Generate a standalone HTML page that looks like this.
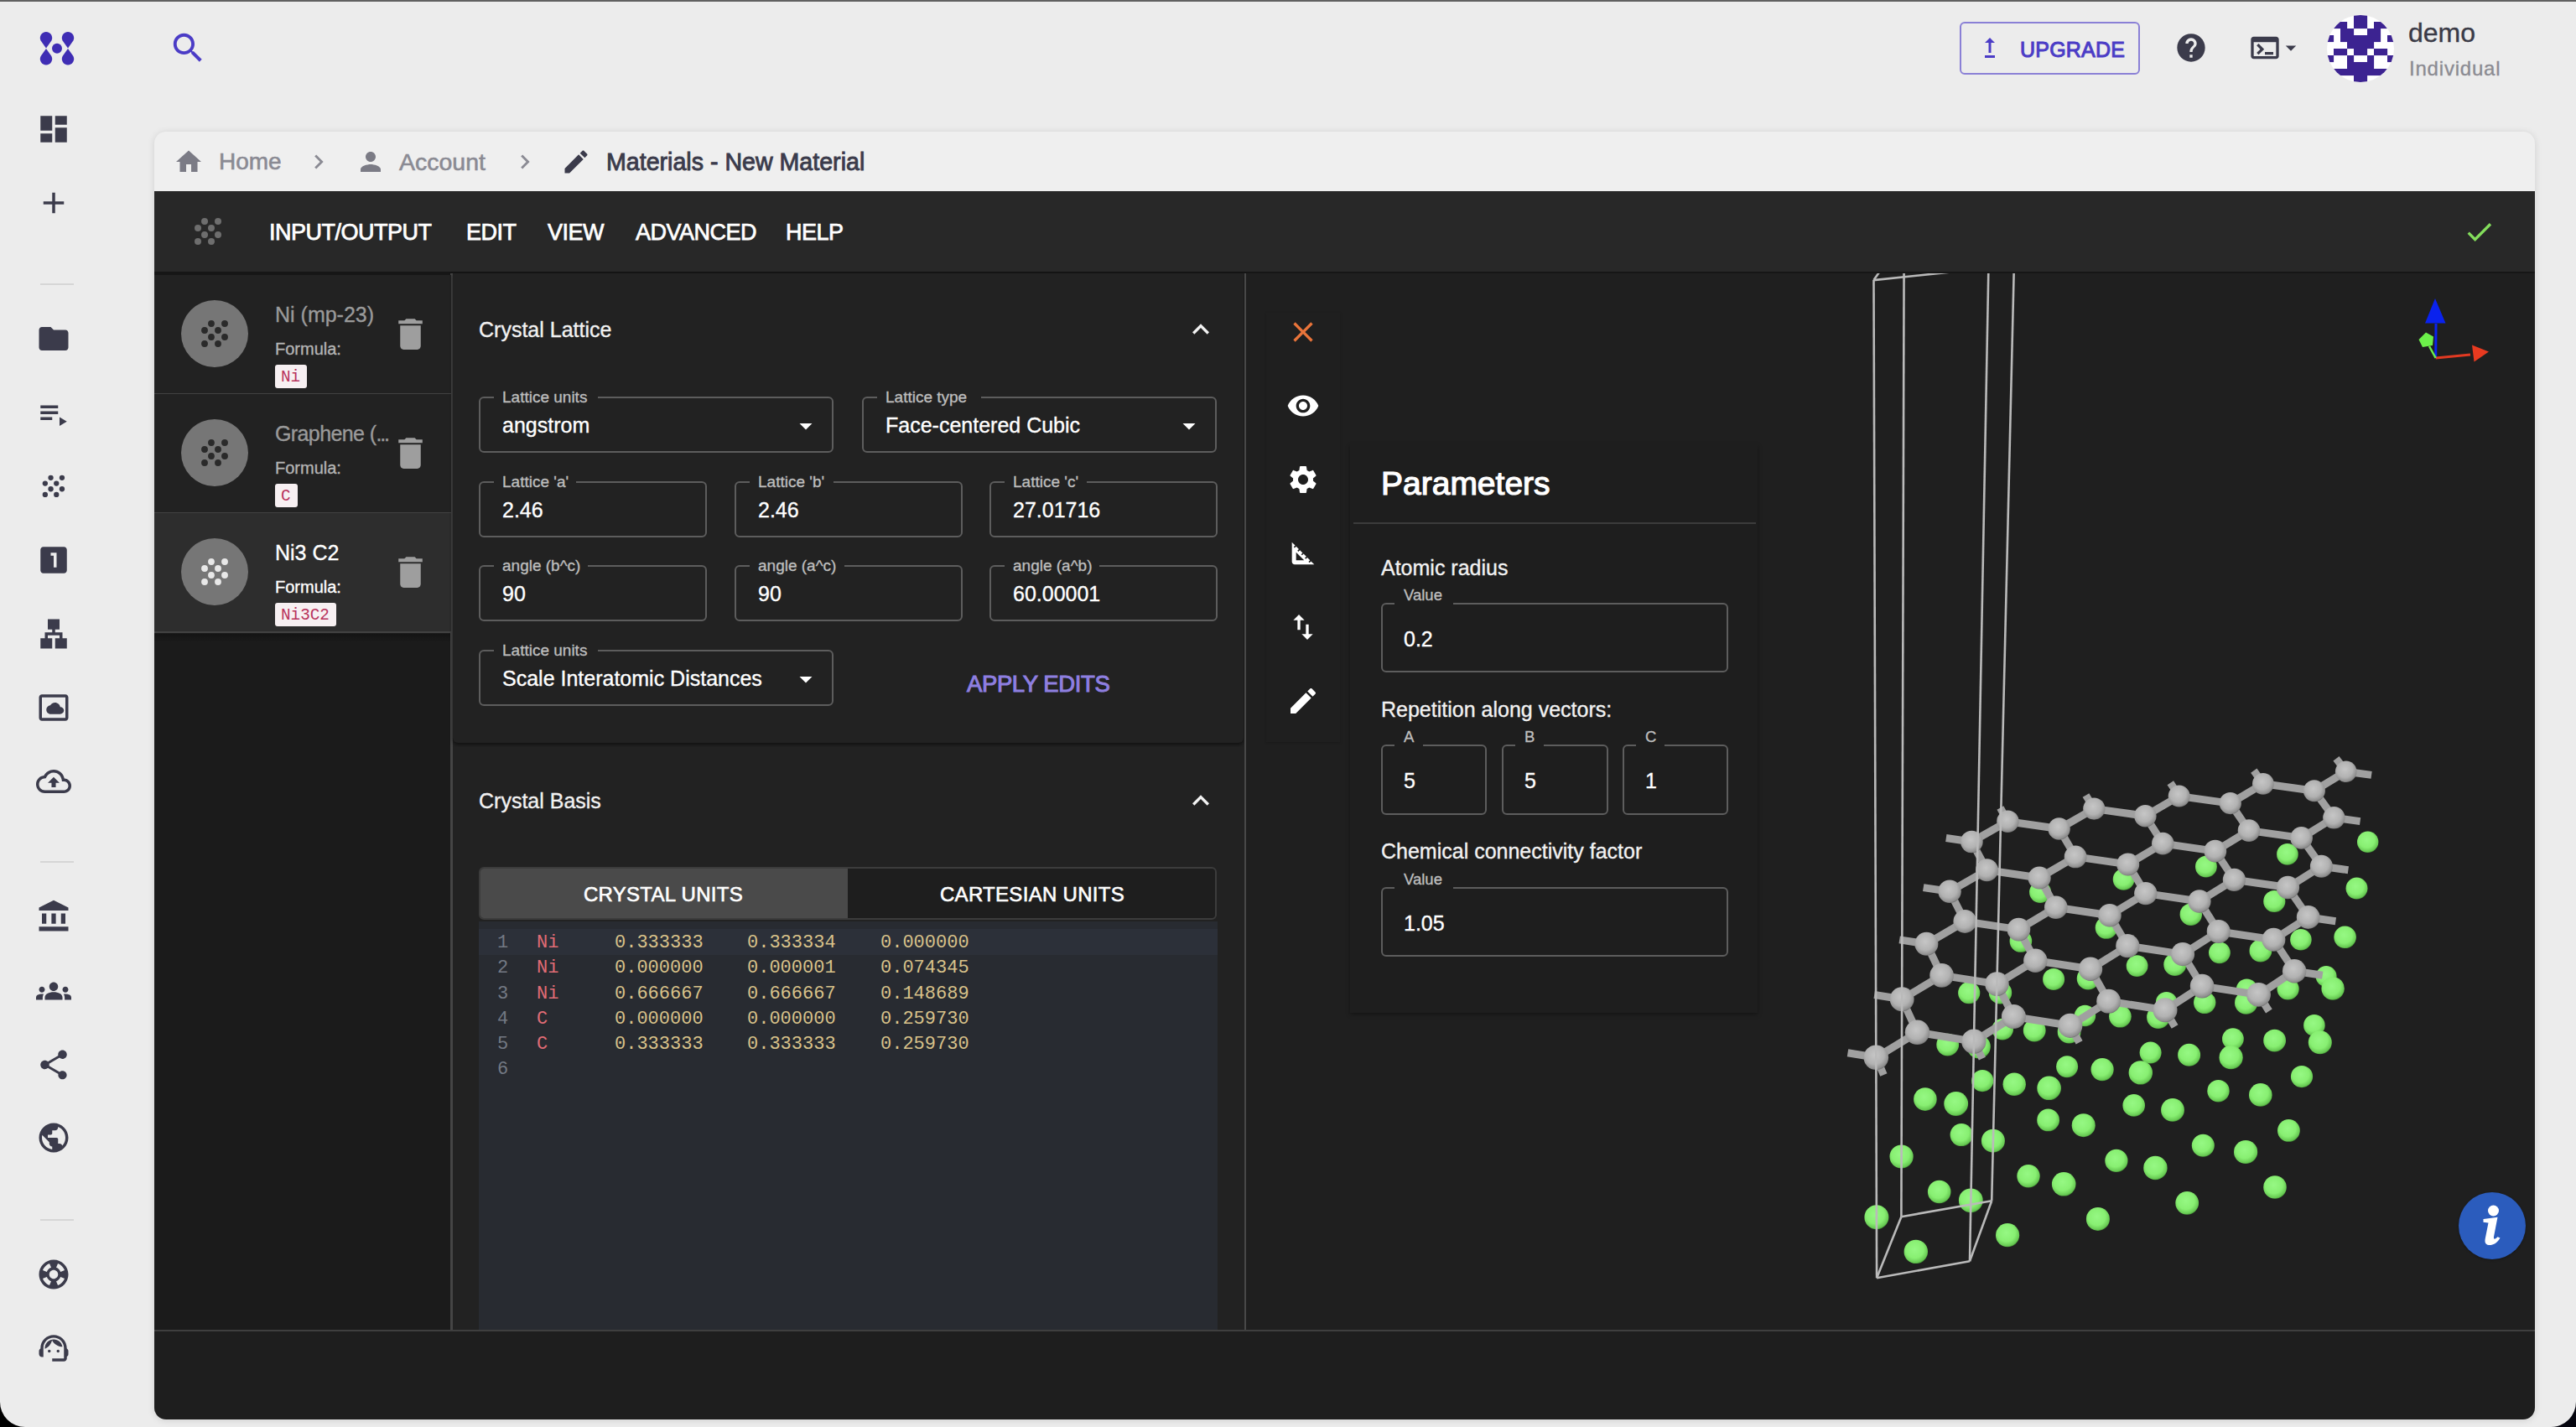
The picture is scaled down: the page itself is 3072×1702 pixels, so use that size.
<!DOCTYPE html><html><head><meta charset="utf-8"><style>html,body{margin:0;padding:0;width:3072px;height:1702px;overflow:hidden;position:relative}</style></head><body><div style="position:absolute;left:0px;top:0px;width:3072px;height:1702px;background:#ececec"></div>
<div style="position:absolute;left:0px;top:0px;width:3072px;height:2px;background:#616161"></div>
<svg style="position:absolute;left:0;top:0;width:200px;height:120px" viewBox="0 0 200 120"><g fill="#3f2db4"><path d="M55 57.5 L48.6 48.5 A7.2 7.2 0 1 1 61.4 48.5 Z"/><path d="M55 58 L48.6 67 A7.2 7.2 0 1 0 61.4 67 Z"/><path d="M81 57.5 L74.6 48.5 A7.2 7.2 0 1 1 87.4 48.5 Z"/><path d="M81 58 L74.6 67 A7.2 7.2 0 1 0 87.4 67 Z"/><circle cx="68" cy="57.8" r="6"/></g></svg>
<svg style="position:absolute;left:200.6px;top:34.3px;width:46.5px;height:46.5px" viewBox="0 0 24 24"><path fill="#4b3cc6" d="M15.5 14h-.79l-.28-.27C15.41 12.59 16 11.11 16 9.5 16 5.91 13.09 3 9.5 3S3 5.910 3 9.5 5.91 16 9.5 16c1.61 0 3.09-.59 4.23-1.57l.27.28v.79l5 4.99L20.49 19l-4.99-5zm-6 0C7.01 14 5 11.99 5 9.5S7.01 5 9.5 5 14 7.01 14 9.5 11.99 14 9.5 14z"/></svg>
<svg style="position:absolute;left:43.0px;top:133.0px;width:42px;height:42px" viewBox="0 0 24 24"><path fill="#3b3b4b" d="M3 13h8V3H3v10zm0 8h8v-6H3v6zm10 0h8V11h-8v10zm0-18v6h8V3h-8z"/></svg>
<svg style="position:absolute;left:43.0px;top:221.0px;width:42px;height:42px" viewBox="0 0 24 24"><path fill="#3b3b4b" d="M19 13h-6v6h-2v-6H5v-2h6V5h2v6h6v2z"/></svg>
<div style="position:absolute;left:48px;top:338px;width:40px;height:2px;background:#d6d6d6"></div>
<svg style="position:absolute;left:43.0px;top:383.0px;width:42px;height:42px" viewBox="0 0 24 24"><path fill="#3b3b4b" d="M10 4H4c-1.1 0-1.99.9-1.99 2L2 18c0 1.1.9 2 2 2h16c1.1 0 2-.9 2-2V8c0-1.1-.9-2-2-2h-8l-2-2z"/></svg>
<svg style="position:absolute;left:43.0px;top:473.0px;width:42px;height:42px" viewBox="0 0 24 24"><path fill="#3b3b4b" d="M3 10h12v2H3zm0-4h12v2H3zm0 8h8v2H3zm13 0v6l5-3z"/></svg>
<svg style="position:absolute;left:0;top:0;width:140px;height:700px"><circle cx="60.55" cy="569.85" r="3.15" fill="#3b3b4b"/><circle cx="73.95" cy="569.85" r="3.15" fill="#3b3b4b"/><circle cx="53.85" cy="576.55" r="3.15" fill="#3b3b4b"/><circle cx="67.25" cy="576.55" r="3.15" fill="#3b3b4b"/><circle cx="60.55" cy="583.25" r="3.15" fill="#3b3b4b"/><circle cx="73.95" cy="583.25" r="3.15" fill="#3b3b4b"/><circle cx="53.85" cy="589.95" r="3.15" fill="#3b3b4b"/><circle cx="67.25" cy="589.95" r="3.15" fill="#3b3b4b"/></svg>
<svg style="position:absolute;left:43.0px;top:647.0px;width:42px;height:42px" viewBox="0 0 24 24"><path fill="#3b3b4b" d="M19 3H5c-1.1 0-2 .9-2 2v14c0 1.1.9 2 2 2h14c1.1 0 2-.9 2-2V5c0-1.1-.9-2-2-2zm-5 14h-2V9h-2V7h4v10z"/></svg>
<svg style="position:absolute;left:43.0px;top:735.0px;width:42px;height:42px" viewBox="0 0 24 24"><path fill="#3b3b4b" d="M13 22h8v-7h-3v-4h-5V9h3V2H8v7h3v2H6v4H3v7h8v-7H8v-2h8v2h-3z"/></svg>
<svg style="position:absolute;left:43.0px;top:823.0px;width:42px;height:42px" viewBox="0 0 24 24"><path fill="#3b3b4b" d="M20 3H4c-1.1 0-2 .9-2 2v14c0 1.1.9 2 2 2h16c1.1 0 2-.9 2-2V5c0-1.1-.9-2-2-2zm0 16H4V5h16v14zM16.5 11.5c-.3-1.7-1.8-3-3.6-3-1.4 0-2.6.8-3.2 1.9-1.5.2-2.7 1.4-2.7 3 0 1.7 1.3 3 3 3h6.4c1.4 0 2.6-1.2 2.6-2.5 0-1.3-1.1-2.4-2.5-2.4z"/></svg>
<svg style="position:absolute;left:43.0px;top:911.0px;width:42px;height:42px" viewBox="0 0 24 24"><path fill="#3b3b4b" d="M19.35 10.04C18.67 6.59 15.64 4 12 4 9.11 4 6.6 5.64 5.35 8.04 2.34 8.36 0 10.91 0 14c0 3.31 2.69 6 6 6h13c2.76 0 5-2.24 5-5 0-2.64-2.05-4.78-4.65-4.96zM19 18H6c-2.21 0-4-1.79-4-4 0-2.05 1.53-3.76 3.56-3.97l1.07-.11.5-.95C8.08 7.14 9.94 6 12 6c2.62 0 4.88 1.86 5.39 4.43l.3 1.5 1.53.11c1.56.1 2.78 1.41 2.78 2.96 0 1.65-1.35 3-3 3zM8 13h2.55v3h2.9v-3H16l-4-4z"/></svg>
<div style="position:absolute;left:48px;top:1027px;width:40px;height:2px;background:#d6d6d6"></div>
<svg style="position:absolute;left:43.0px;top:1072.0px;width:42px;height:42px" viewBox="0 0 24 24"><path fill="#3b3b4b" d="M4 10h3v7H4zM10.5 10h3v7h-3zM2 19h20v3H2zM17 10h3v7h-3zM12 1L2 6v2h20V6z"/></svg>
<svg style="position:absolute;left:43.0px;top:1161.0px;width:42px;height:42px" viewBox="0 0 24 24"><path fill="#3b3b4b" d="M12 12.75c1.63 0 3.07.39 4.24.9 1.08.48 1.76 1.56 1.76 2.73V18H6v-1.61c0-1.18.68-2.26 1.76-2.73 1.17-.52 2.61-.91 4.24-.91zM4 13c1.1 0 2-.9 2-2s-.9-2-2-2-2 .9-2 2 .9 2 2 2zm1.13 1.1c-.37-.06-.74-.1-1.13-.1-.99 0-1.93.21-2.78.58C.48 14.9 0 15.62 0 16.43V18h4.5v-1.610c0-.83.23-1.61.63-2.29zM20 13c1.1 0 2-.9 2-2s-.9-2-2-2-2 .9-2 2 .9 2 2 2zm4 3.43c0-.81-.48-1.53-1.22-1.85-.85-.37-1.79-.58-2.78-.58-.39 0-.76.04-1.13.1.4.68.63 1.46.63 2.29V18H24v-1.57zM12 6c1.66 0 3 1.34 3 3s-1.34 3-3 3-3-1.34-3-3 1.34-3 3-3z"/></svg>
<svg style="position:absolute;left:43.0px;top:1249.0px;width:42px;height:42px" viewBox="0 0 24 24"><path fill="#3b3b4b" d="M18 16.08c-.76 0-1.44.3-1.96.77L8.91 12.7c.05-.23.09-.46.09-.7s-.04-.47-.09-.7l7.05-4.11c.54.5 1.25.81 2.040.81 1.66 0 3-1.34 3-3s-1.34-3-3-3-3 1.34-3 3c0 .24.04.47.09.7L8.04 9.81C7.5 9.31 6.79 9 6 9c-1.66 0-3 1.34-3 3s1.34 3 3 3c.79 0 1.5-.31 2.04-.81l7.12 4.16c-.05.21-.08.43-.08.65 0 1.61 1.31 2.92 2.92 2.92 1.61 0 2.92-1.31 2.92-2.92s-1.31-2.92-2.92-2.92z"/></svg>
<svg style="position:absolute;left:43.0px;top:1336.0px;width:42px;height:42px" viewBox="0 0 24 24"><path fill="#3b3b4b" d="M12 2C6.48 2 2 6.48 2 12s4.48 10 10 10 10-4.48 10-10S17.52 2 12 2zm-1 17.93c-3.95-.49-7-3.85-7-7.930 0-.62.08-1.21.21-1.79L9 15v1c0 1.1.9 2 2 2v1.93zm6.9-2.54c-.26-.81-1-1.39-1.9-1.39h-1v-3c0-.55-.45-1-1-1H8v-2h2c.55 0 1-.45 1-1V7h2c1.1 0 2-.9 2-2v-.41c2.93 1.19 5 4.06 5 7.41 0 2.08-.8 3.97-2.1 5.39z"/></svg>
<div style="position:absolute;left:48px;top:1454px;width:40px;height:2px;background:#d6d6d6"></div>
<svg style="position:absolute;left:43.0px;top:1499.0px;width:42px;height:42px" viewBox="0 0 24 24"><path fill="#3b3b4b" d="M12 2C6.48 2 2 6.48 2 12s4.48 10 10 10 10-4.48 10-10S17.52 2 12 2zm7.46 7.12l-2.78 1.15c-.51-1.36-1.58-2.44-2.95-2.94l1.15-2.78c2.1.8 3.77 2.47 4.58 4.57zM12 15c-1.66 0-3-1.34-3-3s1.34-3 3-3 3 1.34 3 3-1.34 3-3 3zM9.13 4.54l1.17 2.78c-1.38.5-2.47 1.59-2.98 2.97L4.54 9.13c.81-2.11 2.48-3.78 4.59-4.59zM4.54 14.87l2.78-1.15c.51 1.38 1.59 2.46 2.97 2.96l-1.17 2.780c-2.1-.81-3.77-2.48-4.58-4.59zm10.34 4.59l-1.15-2.78c1.37-.51 2.450-1.59 2.95-2.97l2.78 1.17c-.81 2.1-2.48 3.77-4.58 4.58z"/></svg>
<svg style="position:absolute;left:43.0px;top:1587.0px;width:42px;height:42px" viewBox="0 0 24 24"><path fill="#3b3b4b" d="M21 12.22C21 6.73 16.74 3 12 3c-4.69 0-9 3.65-9 9.28-.6.34-1 .98-1 1.72v2c0 1.1.9 2 2 2h1v-6.1c0-3.87 3.13-7 7-7s7 3.13 7 7V19h-8v2h8c1.1 0 2-.9 2-2v-1.22c.59-.31 1-.92 1-1.62v-2.3c0-.7-.41-1.31-1-1.64zM9 13a1 1 0 1 0 0 2a1 1 0 1 0 0-2zM15 13a1 1 0 1 0 0 2a1 1 0 1 0 0-2zM18 11.03C17.52 8.18 15.04 6 12.05 6c-3.03 0-6.29 2.51-6.03 6.45 2.47-1.01 4.33-3.21 4.86-5.89 1.31 2.63 4 4.44 7.12 4.47z"/></svg>
<div style="position:absolute;left:2337px;top:26px;width:215px;height:63px;box-sizing:border-box;border:2px solid #8a80d6;border-radius:6px"></div>
<svg style="position:absolute;left:2355.0px;top:39.0px;width:36px;height:36px" viewBox="0 0 24 24"><path fill="#4b3cc6" d="M16 18v2H8v-2h8zM11 7.99V16h2V7.99h3L12 4 8 7.99h3z"/></svg>
<div style="position:absolute;left:2409px;top:46.75px;font-family:'Liberation Sans',sans-serif;font-size:25px;line-height:1;font-weight:400;color:#4b3cc6;white-space:pre;letter-spacing:0.2px;-webkit-text-stroke:1.0px #4b3cc6">UPGRADE</div>
<svg style="position:absolute;left:2593.0px;top:37.0px;width:40px;height:40px" viewBox="0 0 24 24"><path fill="#3b3b4b" d="M12 2C6.48 2 2 6.48 2 12s4.48 10 10 10 10-4.48 10-10S17.52 2 12 2zm1 17h-2v-2h2v2zm2.07-7.75l-.9.92C13.45 12.9 13 13.5 13 15h-2v-.5c0-1.1.45-2.1 1.17-2.83l1.24-1.26c.37-.36.59-.86.59-1.41 0-1.1-.9-2-2-2s-2 .9-2 2H8c0-2.21 1.79-4 4-4s4 1.79 4 4c0 .88-.36 1.68-.93 2.25z"/></svg>
<svg style="position:absolute;left:2681.0px;top:37.0px;width:40px;height:40px" viewBox="0 0 24 24"><path fill="#3b3b4b" d="M20 4H4c-1.11 0-2 .9-2 2v12c0 1.1.89 2 2 2h16c1.1 0 2-.9 2-2V6c0-1.1-.89-2-2-2zm0 14H4V8h16v10zm-2-1h-6v-2h6v2zM7.5 17l-1.41-1.41L8.67 13l-2.59-2.59L7.5 9l4 4-4 4z"/></svg>
<svg style="position:absolute;left:2717.0px;top:42.0px;width:30px;height:30px" viewBox="0 0 24 24"><path fill="#3b3b4b" d="M7 10l5 5 5-5z"/></svg>
<svg style="position:absolute;left:2775px;top:18px;width:80px;height:80px" viewBox="0 0 80 80"><defs><clipPath id="av"><circle cx="40" cy="40" r="40"/></clipPath></defs><g clip-path="url(#av)"><rect width="80" height="80" fill="#fff"/><rect x="32" y="0" width="8.1" height="8.1" fill="#3c2391"/><rect x="40" y="0" width="8.1" height="8.1" fill="#3c2391"/><rect x="8" y="8" width="8.1" height="8.1" fill="#3c2391"/><rect x="16" y="8" width="8.1" height="8.1" fill="#3c2391"/><rect x="32" y="8" width="8.1" height="8.1" fill="#3c2391"/><rect x="40" y="8" width="8.1" height="8.1" fill="#3c2391"/><rect x="56" y="8" width="8.1" height="8.1" fill="#3c2391"/><rect x="64" y="8" width="8.1" height="8.1" fill="#3c2391"/><rect x="16" y="16" width="8.1" height="8.1" fill="#3c2391"/><rect x="24" y="16" width="8.1" height="8.1" fill="#3c2391"/><rect x="48" y="16" width="8.1" height="8.1" fill="#3c2391"/><rect x="56" y="16" width="8.1" height="8.1" fill="#3c2391"/><rect x="0" y="24" width="8.1" height="8.1" fill="#3c2391"/><rect x="16" y="24" width="8.1" height="8.1" fill="#3c2391"/><rect x="24" y="24" width="8.1" height="8.1" fill="#3c2391"/><rect x="32" y="24" width="8.1" height="8.1" fill="#3c2391"/><rect x="40" y="24" width="8.1" height="8.1" fill="#3c2391"/><rect x="48" y="24" width="8.1" height="8.1" fill="#3c2391"/><rect x="56" y="24" width="8.1" height="8.1" fill="#3c2391"/><rect x="72" y="24" width="8.1" height="8.1" fill="#3c2391"/><rect x="24" y="32" width="8.1" height="8.1" fill="#3c2391"/><rect x="32" y="32" width="8.1" height="8.1" fill="#3c2391"/><rect x="40" y="32" width="8.1" height="8.1" fill="#3c2391"/><rect x="48" y="32" width="8.1" height="8.1" fill="#3c2391"/><rect x="8" y="40" width="8.1" height="8.1" fill="#3c2391"/><rect x="16" y="40" width="8.1" height="8.1" fill="#3c2391"/><rect x="32" y="40" width="8.1" height="8.1" fill="#3c2391"/><rect x="40" y="40" width="8.1" height="8.1" fill="#3c2391"/><rect x="56" y="40" width="8.1" height="8.1" fill="#3c2391"/><rect x="64" y="40" width="8.1" height="8.1" fill="#3c2391"/><rect x="0" y="48" width="8.1" height="8.1" fill="#3c2391"/><rect x="24" y="48" width="8.1" height="8.1" fill="#3c2391"/><rect x="48" y="48" width="8.1" height="8.1" fill="#3c2391"/><rect x="72" y="48" width="8.1" height="8.1" fill="#3c2391"/><rect x="24" y="56" width="8.1" height="8.1" fill="#3c2391"/><rect x="32" y="56" width="8.1" height="8.1" fill="#3c2391"/><rect x="40" y="56" width="8.1" height="8.1" fill="#3c2391"/><rect x="48" y="56" width="8.1" height="8.1" fill="#3c2391"/><rect x="8" y="64" width="8.1" height="8.1" fill="#3c2391"/><rect x="16" y="64" width="8.1" height="8.1" fill="#3c2391"/><rect x="24" y="64" width="8.1" height="8.1" fill="#3c2391"/><rect x="32" y="64" width="8.1" height="8.1" fill="#3c2391"/><rect x="40" y="64" width="8.1" height="8.1" fill="#3c2391"/><rect x="48" y="64" width="8.1" height="8.1" fill="#3c2391"/><rect x="56" y="64" width="8.1" height="8.1" fill="#3c2391"/><rect x="64" y="64" width="8.1" height="8.1" fill="#3c2391"/><rect x="32" y="72" width="8.1" height="8.1" fill="#3c2391"/><rect x="40" y="72" width="8.1" height="8.1" fill="#3c2391"/></g></svg>
<div style="position:absolute;left:2872px;top:22.8px;font-family:'Liberation Sans',sans-serif;font-size:32px;line-height:1;font-weight:400;color:#3a3a46;white-space:pre;;-webkit-text-stroke:0.35px #3a3a46">demo</div>
<div style="position:absolute;left:2873px;top:69.6px;font-family:'Liberation Sans',sans-serif;font-size:24px;line-height:1;font-weight:400;color:#8b8b92;white-space:pre;letter-spacing:0.8px;-webkit-text-stroke:0.35px #8b8b92">Individual</div>
<div style="position:absolute;left:184px;top:157px;width:2839px;height:1536px;background:#efefef;border-radius:14px;box-shadow:0 1px 8px rgba(0,0,0,0.12)"></div>
<svg style="position:absolute;left:206.5px;top:175px;width:36px;height:36px" viewBox="0 0 24 24"><path fill="#7b7b85" d="M10 20v-6h4v6h5v-8h3L12 3 2 12h3v8z"/></svg>
<div style="position:absolute;left:261px;top:179.2px;font-family:'Liberation Sans',sans-serif;font-size:28px;line-height:1;font-weight:400;color:#8a8a93;white-space:pre;;-webkit-text-stroke:0.6px #8a8a93">Home</div>
<svg style="position:absolute;left:363.0px;top:176.0px;width:34px;height:34px" viewBox="0 0 24 24"><path fill="#8a8a93" d="M10 6L8.59 7.41 13.17 12l-4.58 4.59L10 18l6-6z"/></svg>
<svg style="position:absolute;left:424.0px;top:175.0px;width:36px;height:36px" viewBox="0 0 24 24"><path fill="#7b7b85" d="M12 12c2.21 0 4-1.79 4-4s-1.79-4-4-4-4 1.79-4 4 1.79 4 4 4zm0 2c-2.67 0-8 1.34-8 4v2h16v-2c0-2.66-5.33-4-8-4z"/></svg>
<div style="position:absolute;left:476px;top:178.78px;font-family:'Liberation Sans',sans-serif;font-size:28.5px;line-height:1;font-weight:400;color:#8a8a93;white-space:pre;;-webkit-text-stroke:0.6px #8a8a93">Account</div>
<svg style="position:absolute;left:609.0px;top:176.0px;width:34px;height:34px" viewBox="0 0 24 24"><path fill="#8a8a93" d="M10 6L8.59 7.41 13.17 12l-4.58 4.59L10 18l6-6z"/></svg>
<svg style="position:absolute;left:669.0px;top:175.0px;width:36px;height:36px" viewBox="0 0 24 24"><path fill="#3b3b4b" d="M3 17.25V21h3.75L17.81 9.94l-3.75-3.75L3 17.25zM20.71 7.04c.39-.39.39-1.02 0-1.41l-2.34-2.34c-.39-.39-1.02-.39-1.41 0l-1.83 1.83 3.75 3.75 1.83-1.830z"/></svg>
<div style="position:absolute;left:723px;top:178.69px;font-family:'Liberation Sans',sans-serif;font-size:28.6px;line-height:1;font-weight:400;color:#3b3b4b;white-space:pre;;-webkit-text-stroke:0.9px #3b3b4b">Materials - New Material</div>
<div style="position:absolute;left:184px;top:228px;width:2839px;height:1465px;background:#1e1e1e;border-radius:0 0 14px 14px;overflow:hidden"></div>
<div style="position:absolute;left:184px;top:228px;width:2839px;height:96px;background:#282828"></div>
<div style="position:absolute;left:184px;top:324px;width:2839px;height:4px;background:#161616"></div>
<svg style="position:absolute;left:0;top:0;width:400px;height:400px"><circle cx="244.00" cy="264.00" r="4.00" fill="#6e6e6e"/><circle cx="260.00" cy="264.00" r="4.00" fill="#6e6e6e"/><circle cx="236.00" cy="272.00" r="4.00" fill="#6e6e6e"/><circle cx="252.00" cy="272.00" r="4.00" fill="#6e6e6e"/><circle cx="244.00" cy="280.00" r="4.00" fill="#6e6e6e"/><circle cx="260.00" cy="280.00" r="4.00" fill="#6e6e6e"/><circle cx="236.00" cy="288.00" r="4.00" fill="#6e6e6e"/><circle cx="252.00" cy="288.00" r="4.00" fill="#6e6e6e"/></svg>
<div style="position:absolute;left:321px;top:264.05px;font-family:'Liberation Sans',sans-serif;font-size:27px;line-height:1;font-weight:400;color:#ffffff;white-space:pre;letter-spacing:-0.5px;-webkit-text-stroke:0.75px #ffffff">INPUT/OUTPUT</div>
<div style="position:absolute;left:556px;top:264.05px;font-family:'Liberation Sans',sans-serif;font-size:27px;line-height:1;font-weight:400;color:#ffffff;white-space:pre;letter-spacing:-0.5px;-webkit-text-stroke:0.75px #ffffff">EDIT</div>
<div style="position:absolute;left:653px;top:264.05px;font-family:'Liberation Sans',sans-serif;font-size:27px;line-height:1;font-weight:400;color:#ffffff;white-space:pre;letter-spacing:-0.5px;-webkit-text-stroke:0.75px #ffffff">VIEW</div>
<div style="position:absolute;left:758px;top:264.05px;font-family:'Liberation Sans',sans-serif;font-size:27px;line-height:1;font-weight:400;color:#ffffff;white-space:pre;letter-spacing:-0.5px;-webkit-text-stroke:0.75px #ffffff">ADVANCED</div>
<div style="position:absolute;left:937px;top:264.05px;font-family:'Liberation Sans',sans-serif;font-size:27px;line-height:1;font-weight:400;color:#ffffff;white-space:pre;letter-spacing:-0.5px;-webkit-text-stroke:0.75px #ffffff">HELP</div>
<svg style="position:absolute;left:2936.5px;top:256.5px;width:39px;height:39px" viewBox="0 0 24 24"><path fill="#84de5c" d="M9 16.17L4.83 12l-1.42 1.41L9 19 21 7l-1.41-1.41z"/></svg>
<div style="position:absolute;left:184px;top:328px;width:354px;height:1258px;background:#1b1b1b"></div>
<div style="position:absolute;left:184px;top:756px;width:354px;height:10px;background:linear-gradient(#141414,#1b1b1b)"></div>
<div style="position:absolute;left:537px;top:326px;width:3px;height:1260px;background:#454545"></div>
<div style="position:absolute;left:184px;top:328px;width:354px;height:142px;background:#222222"></div>
<div style="position:absolute;left:184px;top:469px;width:354px;height:2px;background:#424242"></div>
<div style="position:absolute;left:216px;top:358px;width:80px;height:80px;background:#767676;border-radius:50%"></div>
<svg style="position:absolute;left:0;top:0;width:540px;height:800px"><circle cx="252.00" cy="386.00" r="3.92" fill="#2a2a2a"/><circle cx="268.00" cy="386.00" r="3.92" fill="#2a2a2a"/><circle cx="244.00" cy="394.00" r="3.92" fill="#2a2a2a"/><circle cx="260.00" cy="394.00" r="3.92" fill="#2a2a2a"/><circle cx="252.00" cy="402.00" r="3.92" fill="#2a2a2a"/><circle cx="268.00" cy="402.00" r="3.92" fill="#2a2a2a"/><circle cx="244.00" cy="410.00" r="3.92" fill="#2a2a2a"/><circle cx="260.00" cy="410.00" r="3.92" fill="#2a2a2a"/></svg>
<div style="position:absolute;left:328px;top:362.75px;font-family:'Liberation Sans',sans-serif;font-size:25px;line-height:1;font-weight:400;color:#9a9a9a;white-space:pre;;-webkit-text-stroke:0.35px #9a9a9a">Ni (mp-23)</div>
<div style="position:absolute;left:328px;top:406.0px;font-family:'Liberation Sans',sans-serif;font-size:20px;line-height:1;font-weight:400;color:#b4b4b4;white-space:pre;;-webkit-text-stroke:0.35px #b4b4b4">Formula:</div>
<div style="position:absolute;left:328px;top:435px;width:38.2px;height:28px;background:#f7f0f2;border-radius:3px"></div>
<div style="position:absolute;left:335px;top:441.22px;font-family:'Liberation Mono',monospace;font-size:19.3px;line-height:1;font-weight:400;color:#b8335c;white-space:pre;">Ni</div>
<svg style="position:absolute;left:464.5px;top:373.5px;width:49px;height:49px" viewBox="0 0 24 24"><path fill="#9e9e9e" d="M6 19c0 1.1.9 2 2 2h8c1.1 0 2-.9 2-2V7H6v12zM19 4h-3.5l-1-1h-5l-1 1H5v2h14V4z"/></svg>
<div style="position:absolute;left:184px;top:470px;width:354px;height:142px;background:#222222"></div>
<div style="position:absolute;left:184px;top:611px;width:354px;height:2px;background:#424242"></div>
<div style="position:absolute;left:216px;top:500px;width:80px;height:80px;background:#767676;border-radius:50%"></div>
<svg style="position:absolute;left:0;top:0;width:540px;height:800px"><circle cx="252.00" cy="528.00" r="3.92" fill="#2a2a2a"/><circle cx="268.00" cy="528.00" r="3.92" fill="#2a2a2a"/><circle cx="244.00" cy="536.00" r="3.92" fill="#2a2a2a"/><circle cx="260.00" cy="536.00" r="3.92" fill="#2a2a2a"/><circle cx="252.00" cy="544.00" r="3.92" fill="#2a2a2a"/><circle cx="268.00" cy="544.00" r="3.92" fill="#2a2a2a"/><circle cx="244.00" cy="552.00" r="3.92" fill="#2a2a2a"/><circle cx="260.00" cy="552.00" r="3.92" fill="#2a2a2a"/></svg>
<div style="position:absolute;left:328px;top:504.75px;font-family:'Liberation Sans',sans-serif;font-size:25px;line-height:1;font-weight:400;color:#9a9a9a;white-space:pre;;-webkit-text-stroke:0.35px #9a9a9a"><span style="letter-spacing:-0.6px">Graphene (</span><span style="letter-spacing:-2.2px">...</span></div>
<div style="position:absolute;left:328px;top:548.0px;font-family:'Liberation Sans',sans-serif;font-size:20px;line-height:1;font-weight:400;color:#b4b4b4;white-space:pre;;-webkit-text-stroke:0.35px #b4b4b4">Formula:</div>
<div style="position:absolute;left:328px;top:577px;width:26.6px;height:28px;background:#f7f0f2;border-radius:3px"></div>
<div style="position:absolute;left:335px;top:583.22px;font-family:'Liberation Mono',monospace;font-size:19.3px;line-height:1;font-weight:400;color:#b8335c;white-space:pre;">C</div>
<svg style="position:absolute;left:464.5px;top:515.5px;width:49px;height:49px" viewBox="0 0 24 24"><path fill="#9e9e9e" d="M6 19c0 1.1.9 2 2 2h8c1.1 0 2-.9 2-2V7H6v12zM19 4h-3.5l-1-1h-5l-1 1H5v2h14V4z"/></svg>
<div style="position:absolute;left:184px;top:612px;width:354px;height:142px;background:#2d2d2d"></div>
<div style="position:absolute;left:184px;top:753px;width:354px;height:2px;background:#424242"></div>
<div style="position:absolute;left:216px;top:642px;width:80px;height:80px;background:#767676;border-radius:50%"></div>
<svg style="position:absolute;left:0;top:0;width:540px;height:800px"><circle cx="252.00" cy="670.00" r="3.92" fill="#e8e8e8"/><circle cx="268.00" cy="670.00" r="3.92" fill="#e8e8e8"/><circle cx="244.00" cy="678.00" r="3.92" fill="#e8e8e8"/><circle cx="260.00" cy="678.00" r="3.92" fill="#e8e8e8"/><circle cx="252.00" cy="686.00" r="3.92" fill="#e8e8e8"/><circle cx="268.00" cy="686.00" r="3.92" fill="#e8e8e8"/><circle cx="244.00" cy="694.00" r="3.92" fill="#e8e8e8"/><circle cx="260.00" cy="694.00" r="3.92" fill="#e8e8e8"/></svg>
<div style="position:absolute;left:328px;top:646.75px;font-family:'Liberation Sans',sans-serif;font-size:25px;line-height:1;font-weight:400;color:#ffffff;white-space:pre;;-webkit-text-stroke:0.35px #ffffff">Ni3 C2</div>
<div style="position:absolute;left:328px;top:690.0px;font-family:'Liberation Sans',sans-serif;font-size:20px;line-height:1;font-weight:400;color:#ffffff;white-space:pre;;-webkit-text-stroke:0.35px #ffffff">Formula:</div>
<div style="position:absolute;left:328px;top:719px;width:73.0px;height:28px;background:#f7f0f2;border-radius:3px"></div>
<div style="position:absolute;left:335px;top:725.22px;font-family:'Liberation Mono',monospace;font-size:19.3px;line-height:1;font-weight:400;color:#b8335c;white-space:pre;">Ni3C2</div>
<svg style="position:absolute;left:464.5px;top:657.5px;width:49px;height:49px" viewBox="0 0 24 24"><path fill="#9e9e9e" d="M6 19c0 1.1.9 2 2 2h8c1.1 0 2-.9 2-2V7H6v12zM19 4h-3.5l-1-1h-5l-1 1H5v2h14V4z"/></svg>
<div style="position:absolute;left:540px;top:326px;width:944px;height:1260px;background:#222222"></div>
<div style="position:absolute;left:540px;top:326px;width:943px;height:560px;background:#222222;border-radius:0 0 6px 6px;box-shadow:0 2px 4px rgba(0,0,0,0.55)"></div>
<div style="position:absolute;left:540px;top:891px;width:943px;height:695px;background:#222222"></div>
<div style="position:absolute;left:1484px;top:326px;width:2.5px;height:1260px;background:#484848"></div>
<div style="position:absolute;left:571px;top:380.75px;font-family:'Liberation Sans',sans-serif;font-size:25px;line-height:1;font-weight:400;color:#f2f2f2;white-space:pre;;-webkit-text-stroke:0.35px #f2f2f2">Crystal Lattice</div>
<svg style="position:absolute;left:1412.0px;top:373.0px;width:40px;height:40px" viewBox="0 0 24 24"><path fill="#f2f2f2" d="M12 8l-6 6 1.41 1.41L12 10.83l4.59 4.58L18 14z"/></svg>
<div style="position:absolute;left:571px;top:473px;width:423px;height:67px;box-sizing:border-box;border:2px solid #5d5d5d;border-radius:6px"></div>
<div style="position:absolute;left:589px;top:469px;width:124px;height:8px;background:#222222"></div>
<div style="position:absolute;left:599px;top:463.85px;font-family:'Liberation Sans',sans-serif;font-size:19px;line-height:1;font-weight:400;color:#bdbdbd;white-space:pre;;-webkit-text-stroke:0.35px #bdbdbd">Lattice units</div>
<div style="position:absolute;left:599px;top:494.75px;font-family:'Liberation Sans',sans-serif;font-size:25px;line-height:1;font-weight:400;color:#ffffff;white-space:pre;;-webkit-text-stroke:0.35px #ffffff">angstrom</div>
<svg style="position:absolute;left:943.0px;top:489.5px;width:36px;height:36px" viewBox="0 0 24 24"><path fill="#ffffff" d="M7 10l5 5 5-5z"/></svg>
<div style="position:absolute;left:1028px;top:473px;width:423px;height:67px;box-sizing:border-box;border:2px solid #5d5d5d;border-radius:6px"></div>
<div style="position:absolute;left:1046px;top:469px;width:124px;height:8px;background:#222222"></div>
<div style="position:absolute;left:1056px;top:463.85px;font-family:'Liberation Sans',sans-serif;font-size:19px;line-height:1;font-weight:400;color:#bdbdbd;white-space:pre;;-webkit-text-stroke:0.35px #bdbdbd">Lattice type</div>
<div style="position:absolute;left:1056px;top:494.75px;font-family:'Liberation Sans',sans-serif;font-size:25px;line-height:1;font-weight:400;color:#ffffff;white-space:pre;;-webkit-text-stroke:0.35px #ffffff">Face-centered Cubic</div>
<svg style="position:absolute;left:1400.0px;top:489.5px;width:36px;height:36px" viewBox="0 0 24 24"><path fill="#ffffff" d="M7 10l5 5 5-5z"/></svg>
<div style="position:absolute;left:571px;top:574px;width:272px;height:67px;box-sizing:border-box;border:2px solid #5d5d5d;border-radius:6px"></div>
<div style="position:absolute;left:589px;top:570px;width:98px;height:8px;background:#222222"></div>
<div style="position:absolute;left:599px;top:564.85px;font-family:'Liberation Sans',sans-serif;font-size:19px;line-height:1;font-weight:400;color:#bdbdbd;white-space:pre;;-webkit-text-stroke:0.35px #bdbdbd">Lattice 'a'</div>
<div style="position:absolute;left:599px;top:595.75px;font-family:'Liberation Sans',sans-serif;font-size:25px;line-height:1;font-weight:400;color:#ffffff;white-space:pre;;-webkit-text-stroke:0.35px #ffffff">2.46</div>
<div style="position:absolute;left:876px;top:574px;width:272px;height:67px;box-sizing:border-box;border:2px solid #5d5d5d;border-radius:6px"></div>
<div style="position:absolute;left:894px;top:570px;width:100px;height:8px;background:#222222"></div>
<div style="position:absolute;left:904px;top:564.85px;font-family:'Liberation Sans',sans-serif;font-size:19px;line-height:1;font-weight:400;color:#bdbdbd;white-space:pre;;-webkit-text-stroke:0.35px #bdbdbd">Lattice 'b'</div>
<div style="position:absolute;left:904px;top:595.75px;font-family:'Liberation Sans',sans-serif;font-size:25px;line-height:1;font-weight:400;color:#ffffff;white-space:pre;;-webkit-text-stroke:0.35px #ffffff">2.46</div>
<div style="position:absolute;left:1180px;top:574px;width:272px;height:67px;box-sizing:border-box;border:2px solid #5d5d5d;border-radius:6px"></div>
<div style="position:absolute;left:1198px;top:570px;width:98px;height:8px;background:#222222"></div>
<div style="position:absolute;left:1208px;top:564.85px;font-family:'Liberation Sans',sans-serif;font-size:19px;line-height:1;font-weight:400;color:#bdbdbd;white-space:pre;;-webkit-text-stroke:0.35px #bdbdbd">Lattice 'c'</div>
<div style="position:absolute;left:1208px;top:595.75px;font-family:'Liberation Sans',sans-serif;font-size:25px;line-height:1;font-weight:400;color:#ffffff;white-space:pre;;-webkit-text-stroke:0.35px #ffffff">27.01716</div>
<div style="position:absolute;left:571px;top:674px;width:272px;height:67px;box-sizing:border-box;border:2px solid #5d5d5d;border-radius:6px"></div>
<div style="position:absolute;left:589px;top:670px;width:112px;height:8px;background:#222222"></div>
<div style="position:absolute;left:599px;top:664.85px;font-family:'Liberation Sans',sans-serif;font-size:19px;line-height:1;font-weight:400;color:#bdbdbd;white-space:pre;;-webkit-text-stroke:0.35px #bdbdbd">angle (b^c)</div>
<div style="position:absolute;left:599px;top:695.75px;font-family:'Liberation Sans',sans-serif;font-size:25px;line-height:1;font-weight:400;color:#ffffff;white-space:pre;;-webkit-text-stroke:0.35px #ffffff">90</div>
<div style="position:absolute;left:876px;top:674px;width:272px;height:67px;box-sizing:border-box;border:2px solid #5d5d5d;border-radius:6px"></div>
<div style="position:absolute;left:894px;top:670px;width:113px;height:8px;background:#222222"></div>
<div style="position:absolute;left:904px;top:664.85px;font-family:'Liberation Sans',sans-serif;font-size:19px;line-height:1;font-weight:400;color:#bdbdbd;white-space:pre;;-webkit-text-stroke:0.35px #bdbdbd">angle (a^c)</div>
<div style="position:absolute;left:904px;top:695.75px;font-family:'Liberation Sans',sans-serif;font-size:25px;line-height:1;font-weight:400;color:#ffffff;white-space:pre;;-webkit-text-stroke:0.35px #ffffff">90</div>
<div style="position:absolute;left:1180px;top:674px;width:272px;height:67px;box-sizing:border-box;border:2px solid #5d5d5d;border-radius:6px"></div>
<div style="position:absolute;left:1198px;top:670px;width:113px;height:8px;background:#222222"></div>
<div style="position:absolute;left:1208px;top:664.85px;font-family:'Liberation Sans',sans-serif;font-size:19px;line-height:1;font-weight:400;color:#bdbdbd;white-space:pre;;-webkit-text-stroke:0.35px #bdbdbd">angle (a^b)</div>
<div style="position:absolute;left:1208px;top:695.75px;font-family:'Liberation Sans',sans-serif;font-size:25px;line-height:1;font-weight:400;color:#ffffff;white-space:pre;;-webkit-text-stroke:0.35px #ffffff">60.00001</div>
<div style="position:absolute;left:571px;top:775px;width:423px;height:67px;box-sizing:border-box;border:2px solid #5d5d5d;border-radius:6px"></div>
<div style="position:absolute;left:589px;top:771px;width:124px;height:8px;background:#222222"></div>
<div style="position:absolute;left:599px;top:765.85px;font-family:'Liberation Sans',sans-serif;font-size:19px;line-height:1;font-weight:400;color:#bdbdbd;white-space:pre;;-webkit-text-stroke:0.35px #bdbdbd">Lattice units</div>
<div style="position:absolute;left:599px;top:796.75px;font-family:'Liberation Sans',sans-serif;font-size:25px;line-height:1;font-weight:400;color:#ffffff;white-space:pre;;-webkit-text-stroke:0.35px #ffffff">Scale Interatomic Distances</div>
<svg style="position:absolute;left:943.0px;top:791.5px;width:36px;height:36px" viewBox="0 0 24 24"><path fill="#ffffff" d="M7 10l5 5 5-5z"/></svg>
<div style="position:absolute;left:1153px;top:801.62px;font-family:'Liberation Sans',sans-serif;font-size:27.5px;line-height:1;font-weight:400;color:#8e7fe0;white-space:pre;letter-spacing:-0.4px;-webkit-text-stroke:1.0px #8e7fe0">APPLY EDITS</div>
<div style="position:absolute;left:571px;top:942.75px;font-family:'Liberation Sans',sans-serif;font-size:25px;line-height:1;font-weight:400;color:#f2f2f2;white-space:pre;;-webkit-text-stroke:0.35px #f2f2f2">Crystal Basis</div>
<svg style="position:absolute;left:1412.0px;top:935.0px;width:40px;height:40px" viewBox="0 0 24 24"><path fill="#f2f2f2" d="M12 8l-6 6 1.41 1.41L12 10.83l4.59 4.58L18 14z"/></svg>
<div style="position:absolute;left:571px;top:1034px;width:880px;height:63px;box-sizing:border-box;border:2px solid #3c3c3c;border-radius:6px;background:#1e1e1e"></div>
<div style="position:absolute;left:573px;top:1036px;width:438px;height:59px;background:#4a4a4a;border-radius:4px 0 0 4px"></div>
<div style="position:absolute;left:791px;transform:translateX(-50%);top:1054.6px;font-family:'Liberation Sans',sans-serif;font-size:24px;line-height:1;font-weight:400;color:#ffffff;white-space:pre;letter-spacing:0.3px;-webkit-text-stroke:0.6px #ffffff">CRYSTAL UNITS</div>
<div style="position:absolute;left:1231px;transform:translateX(-50%);top:1054.6px;font-family:'Liberation Sans',sans-serif;font-size:24px;line-height:1;font-weight:400;color:#ffffff;white-space:pre;letter-spacing:0.3px;-webkit-text-stroke:0.6px #ffffff">CARTESIAN UNITS</div>
<div style="position:absolute;left:571px;top:1099px;width:881px;height:487px;background:#282b31"></div>
<div style="position:absolute;left:571px;top:1108px;width:881px;height:31px;background:#2c3039"></div>
<div style="position:absolute;left:593px;top:1114.15px;font-family:'Liberation Mono',monospace;font-size:22px;line-height:1;font-weight:400;color:#737984;white-space:pre;">1</div>
<div style="position:absolute;left:640px;top:1114.15px;font-family:'Liberation Mono',monospace;font-size:22px;line-height:1;font-weight:400;color:#e06c75;white-space:pre;">Ni</div>
<div style="position:absolute;left:733px;top:1114.15px;font-family:'Liberation Mono',monospace;font-size:22px;line-height:1;font-weight:400;color:#d9c28a;white-space:pre;">0.333333</div>
<div style="position:absolute;left:891px;top:1114.15px;font-family:'Liberation Mono',monospace;font-size:22px;line-height:1;font-weight:400;color:#d9c28a;white-space:pre;">0.333334</div>
<div style="position:absolute;left:1050px;top:1114.15px;font-family:'Liberation Mono',monospace;font-size:22px;line-height:1;font-weight:400;color:#d9c28a;white-space:pre;">0.000000</div>
<div style="position:absolute;left:593px;top:1144.35px;font-family:'Liberation Mono',monospace;font-size:22px;line-height:1;font-weight:400;color:#737984;white-space:pre;">2</div>
<div style="position:absolute;left:640px;top:1144.35px;font-family:'Liberation Mono',monospace;font-size:22px;line-height:1;font-weight:400;color:#e06c75;white-space:pre;">Ni</div>
<div style="position:absolute;left:733px;top:1144.35px;font-family:'Liberation Mono',monospace;font-size:22px;line-height:1;font-weight:400;color:#d9c28a;white-space:pre;">0.000000</div>
<div style="position:absolute;left:891px;top:1144.35px;font-family:'Liberation Mono',monospace;font-size:22px;line-height:1;font-weight:400;color:#d9c28a;white-space:pre;">0.000001</div>
<div style="position:absolute;left:1050px;top:1144.35px;font-family:'Liberation Mono',monospace;font-size:22px;line-height:1;font-weight:400;color:#d9c28a;white-space:pre;">0.074345</div>
<div style="position:absolute;left:593px;top:1174.55px;font-family:'Liberation Mono',monospace;font-size:22px;line-height:1;font-weight:400;color:#737984;white-space:pre;">3</div>
<div style="position:absolute;left:640px;top:1174.55px;font-family:'Liberation Mono',monospace;font-size:22px;line-height:1;font-weight:400;color:#e06c75;white-space:pre;">Ni</div>
<div style="position:absolute;left:733px;top:1174.55px;font-family:'Liberation Mono',monospace;font-size:22px;line-height:1;font-weight:400;color:#d9c28a;white-space:pre;">0.666667</div>
<div style="position:absolute;left:891px;top:1174.55px;font-family:'Liberation Mono',monospace;font-size:22px;line-height:1;font-weight:400;color:#d9c28a;white-space:pre;">0.666667</div>
<div style="position:absolute;left:1050px;top:1174.55px;font-family:'Liberation Mono',monospace;font-size:22px;line-height:1;font-weight:400;color:#d9c28a;white-space:pre;">0.148689</div>
<div style="position:absolute;left:593px;top:1204.75px;font-family:'Liberation Mono',monospace;font-size:22px;line-height:1;font-weight:400;color:#737984;white-space:pre;">4</div>
<div style="position:absolute;left:640px;top:1204.75px;font-family:'Liberation Mono',monospace;font-size:22px;line-height:1;font-weight:400;color:#e06c75;white-space:pre;">C</div>
<div style="position:absolute;left:733px;top:1204.75px;font-family:'Liberation Mono',monospace;font-size:22px;line-height:1;font-weight:400;color:#d9c28a;white-space:pre;">0.000000</div>
<div style="position:absolute;left:891px;top:1204.75px;font-family:'Liberation Mono',monospace;font-size:22px;line-height:1;font-weight:400;color:#d9c28a;white-space:pre;">0.000000</div>
<div style="position:absolute;left:1050px;top:1204.75px;font-family:'Liberation Mono',monospace;font-size:22px;line-height:1;font-weight:400;color:#d9c28a;white-space:pre;">0.259730</div>
<div style="position:absolute;left:593px;top:1234.95px;font-family:'Liberation Mono',monospace;font-size:22px;line-height:1;font-weight:400;color:#737984;white-space:pre;">5</div>
<div style="position:absolute;left:640px;top:1234.95px;font-family:'Liberation Mono',monospace;font-size:22px;line-height:1;font-weight:400;color:#e06c75;white-space:pre;">C</div>
<div style="position:absolute;left:733px;top:1234.95px;font-family:'Liberation Mono',monospace;font-size:22px;line-height:1;font-weight:400;color:#d9c28a;white-space:pre;">0.333333</div>
<div style="position:absolute;left:891px;top:1234.95px;font-family:'Liberation Mono',monospace;font-size:22px;line-height:1;font-weight:400;color:#d9c28a;white-space:pre;">0.333333</div>
<div style="position:absolute;left:1050px;top:1234.95px;font-family:'Liberation Mono',monospace;font-size:22px;line-height:1;font-weight:400;color:#d9c28a;white-space:pre;">0.259730</div>
<div style="position:absolute;left:593px;top:1265.15px;font-family:'Liberation Mono',monospace;font-size:22px;line-height:1;font-weight:400;color:#737984;white-space:pre;">6</div>
<div style="position:absolute;left:184px;top:1586px;width:2839px;height:2px;background:#3f3f3f"></div>
<div style="position:absolute;left:1486px;top:326px;width:1537px;height:1260px;background:#1f1f1f"></div>
<div style="position:absolute;left:1510px;top:373px;width:88px;height:512px;background:#1f1f1f;box-shadow:0 1px 3px rgba(0,0,0,0.2)"></div>
<svg style="position:absolute;left:1534.0px;top:376.0px;width:40px;height:40px" viewBox="0 0 24 24"><path fill="#e9743a" d="M19 6.41L17.59 5 12 10.59 6.41 5 5 6.41 10.59 12 5 17.59 6.41 19 12 13.41 17.59 19 19 17.59 13.41 12z"/></svg>
<svg style="position:absolute;left:1534.0px;top:464.0px;width:40px;height:40px" viewBox="0 0 24 24"><path fill="#ffffff" d="M12 4.5C7 4.5 2.73 7.61 1 12c1.73 4.39 6 7.5 11 7.5s9.27-3.11 11-7.5c-1.73-4.39-6-7.5-11-7.5zM12 17c-2.76 0-5-2.24-5-5s2.24-5 5-5 5 2.24 5 5-2.24 5-5 5zm0-8c-1.66 0-3 1.34-3 3s1.34 3 3 3 3-1.34 3-3-1.34-3-3-3z"/></svg>
<svg style="position:absolute;left:1534.0px;top:552.0px;width:40px;height:40px" viewBox="0 0 24 24"><path fill="#ffffff" d="M19.14 12.94c.04-.3.06-.61.06-.94 0-.32-.02-.64-.07-.94l2.03-1.58c.18-.14.23-.41.12-.61l-1.92-3.32c-.12-.22-.37-.29-.59-.22l-2.39.96c-.5-.38-1.03-.7-1.62-.94l-.36-2.54c-.04-.24-.24-.41-.48-.41h-3.84c-.24 0-.43.17-.47.41l-.36 2.54c-.59.24-1.13.57-1.62.94l-2.39-.96c-.22-.08-.47 0-.59.22L2.74 8.87c-.12.21-.08.47.12.61l2.03 1.58c-.05.3-.09.63-.09.94s.02.64.07.94l-2.03 1.58c-.18.14-.23.41-.12.61l1.92 3.32c.12.22.37.29.59.22l2.39-.96c.5.38 1.03.7 1.62.94l.36 2.54c.05.24.24.41.48.41h3.84c.24 0 .44-.17.47-.41l.36-2.54c.59-.24 1.13-.56 1.62-.94l2.39.96c.22.08.47 0 .59-.22l1.92-3.32c.12-.22.07-.47-.12-.61l-2.01-1.58zM12 15.6c-1.98 0-3.6-1.62-3.6-3.6s1.62-3.6 3.6-3.6 3.6 1.62 3.6 3.6-1.62 3.6-3.6 3.6z"/></svg>
<svg style="position:absolute;left:1534.0px;top:640.0px;width:40px;height:40px" viewBox="0 0 24 24"><path fill="#ffffff" d="M17.66 17.66l-1.06 1.06-.71-.71 1.06-1.06-1.94-1.94-1.06 1.06-.71-.71 1.06-1.06-1.94-1.94-1.06 1.06-.71-.71 1.06-1.06L9.7 9.7l-1.06 1.06-.71-.71 1.06-1.06-1.94-1.94-1.06 1.06-.71-.71 1.06-1.06L4 4v14c0 1.1.9 2 2 2h14l-2.34-2.34zM7 17v-5.76L12.76 17H7z"/></svg>
<svg style="position:absolute;left:1534.0px;top:728.0px;width:40px;height:40px" viewBox="0 0 24 24"><path fill="#ffffff" d="M16 17.01V10h-2v7.01h-3L15 21l4-3.99h-3zM9 3L5 6.99h3V14h2V6.99h3L9 3z"/></svg>
<svg style="position:absolute;left:1534.0px;top:816.0px;width:40px;height:40px" viewBox="0 0 24 24"><path fill="#ffffff" d="M3 17.25V21h3.75L17.81 9.94l-3.75-3.75L3 17.25zM20.71 7.04c.39-.39.39-1.02 0-1.41l-2.34-2.34c-.39-.39-1.02-.39-1.41 0l-1.83 1.83 3.75 3.75 1.83-1.830z"/></svg>
<div style="position:absolute;left:1610px;top:530px;width:486px;height:678px;background:#1e1e1e;box-shadow:0 2px 5px rgba(0,0,0,0.35)"></div>
<div style="position:absolute;left:1647px;top:556.85px;font-family:'Liberation Sans',sans-serif;font-size:39px;line-height:1;font-weight:400;color:#ffffff;white-space:pre;;-webkit-text-stroke:1.2px #ffffff">Parameters</div>
<div style="position:absolute;left:1614px;top:623px;width:480px;height:2px;background:#3c3c3c"></div>
<div style="position:absolute;left:1647px;top:664.75px;font-family:'Liberation Sans',sans-serif;font-size:25px;line-height:1;font-weight:400;color:#f2f2f2;white-space:pre;;-webkit-text-stroke:0.35px #f2f2f2">Atomic radius</div>
<div style="position:absolute;left:1647px;top:719px;width:414px;height:83px;box-sizing:border-box;border:2px solid #5d5d5d;border-radius:6px"></div>
<div style="position:absolute;left:1663px;top:715px;width:70px;height:8px;background:#1e1e1e"></div>
<div style="position:absolute;left:1674px;top:701.27px;font-family:'Liberation Sans',sans-serif;font-size:18.5px;line-height:1;font-weight:400;color:#bdbdbd;white-space:pre;;-webkit-text-stroke:0.35px #bdbdbd">Value</div>
<div style="position:absolute;left:1674px;top:749.75px;font-family:'Liberation Sans',sans-serif;font-size:25px;line-height:1;font-weight:400;color:#ffffff;white-space:pre;;-webkit-text-stroke:0.35px #ffffff">0.2</div>
<div style="position:absolute;left:1647px;top:833.75px;font-family:'Liberation Sans',sans-serif;font-size:25px;line-height:1;font-weight:400;color:#f2f2f2;white-space:pre;;-webkit-text-stroke:0.35px #f2f2f2">Repetition along vectors:</div>
<div style="position:absolute;left:1647px;top:888px;width:126px;height:84px;box-sizing:border-box;border:2px solid #5d5d5d;border-radius:6px"></div>
<div style="position:absolute;left:1663px;top:884px;width:34px;height:8px;background:#1e1e1e"></div>
<div style="position:absolute;left:1674px;top:870.27px;font-family:'Liberation Sans',sans-serif;font-size:18.5px;line-height:1;font-weight:400;color:#bdbdbd;white-space:pre;;-webkit-text-stroke:0.35px #bdbdbd">A</div>
<div style="position:absolute;left:1674px;top:918.75px;font-family:'Liberation Sans',sans-serif;font-size:25px;line-height:1;font-weight:400;color:#ffffff;white-space:pre;;-webkit-text-stroke:0.35px #ffffff">5</div>
<div style="position:absolute;left:1791px;top:888px;width:127px;height:84px;box-sizing:border-box;border:2px solid #5d5d5d;border-radius:6px"></div>
<div style="position:absolute;left:1807px;top:884px;width:34px;height:8px;background:#1e1e1e"></div>
<div style="position:absolute;left:1818px;top:870.27px;font-family:'Liberation Sans',sans-serif;font-size:18.5px;line-height:1;font-weight:400;color:#bdbdbd;white-space:pre;;-webkit-text-stroke:0.35px #bdbdbd">B</div>
<div style="position:absolute;left:1818px;top:918.75px;font-family:'Liberation Sans',sans-serif;font-size:25px;line-height:1;font-weight:400;color:#ffffff;white-space:pre;;-webkit-text-stroke:0.35px #ffffff">5</div>
<div style="position:absolute;left:1935px;top:888px;width:126px;height:84px;box-sizing:border-box;border:2px solid #5d5d5d;border-radius:6px"></div>
<div style="position:absolute;left:1951px;top:884px;width:34px;height:8px;background:#1e1e1e"></div>
<div style="position:absolute;left:1962px;top:870.27px;font-family:'Liberation Sans',sans-serif;font-size:18.5px;line-height:1;font-weight:400;color:#bdbdbd;white-space:pre;;-webkit-text-stroke:0.35px #bdbdbd">C</div>
<div style="position:absolute;left:1962px;top:918.75px;font-family:'Liberation Sans',sans-serif;font-size:25px;line-height:1;font-weight:400;color:#ffffff;white-space:pre;;-webkit-text-stroke:0.35px #ffffff">1</div>
<div style="position:absolute;left:1647px;top:1002.75px;font-family:'Liberation Sans',sans-serif;font-size:25px;line-height:1;font-weight:400;color:#f2f2f2;white-space:pre;;-webkit-text-stroke:0.35px #f2f2f2">Chemical connectivity factor</div>
<div style="position:absolute;left:1647px;top:1058px;width:414px;height:83px;box-sizing:border-box;border:2px solid #5d5d5d;border-radius:6px"></div>
<div style="position:absolute;left:1663px;top:1054px;width:70px;height:8px;background:#1e1e1e"></div>
<div style="position:absolute;left:1674px;top:1040.28px;font-family:'Liberation Sans',sans-serif;font-size:18.5px;line-height:1;font-weight:400;color:#bdbdbd;white-space:pre;;-webkit-text-stroke:0.35px #bdbdbd">Value</div>
<div style="position:absolute;left:1674px;top:1088.75px;font-family:'Liberation Sans',sans-serif;font-size:25px;line-height:1;font-weight:400;color:#ffffff;white-space:pre;;-webkit-text-stroke:0.35px #ffffff">1.05</div>
<svg style="position:absolute;left:1486px;top:326px;width:1537px;height:1260px" viewBox="1486 326 1537 1260">
<defs><radialGradient id="gC" cx="0.45" cy="0.4" r="0.62"><stop offset="0" stop-color="#c6c6c6"/><stop offset="0.6" stop-color="#b2b2b2"/><stop offset="0.9" stop-color="#8e8e8e"/><stop offset="1" stop-color="#6a6a6a"/></radialGradient><radialGradient id="gN" cx="0.45" cy="0.4" r="0.62"><stop offset="0" stop-color="#96f884"/><stop offset="0.6" stop-color="#88ef72"/><stop offset="0.9" stop-color="#66c852"/><stop offset="1" stop-color="#3f8a32"/></radialGradient></defs>
<circle cx="2774.1" cy="1164.5" r="12.5" fill="url(#gN)"/>
<circle cx="2679.4" cy="1180.0" r="12.6" fill="url(#gN)"/>
<circle cx="2583.6" cy="1195.6" r="12.7" fill="url(#gN)"/>
<circle cx="2823.7" cy="1004.2" r="12.7" fill="url(#gN)"/>
<circle cx="2486.5" cy="1211.5" r="12.7" fill="url(#gN)"/>
<circle cx="2727.9" cy="1018.9" r="12.8" fill="url(#gN)"/>
<circle cx="2743.9" cy="1120.8" r="12.8" fill="url(#gN)"/>
<circle cx="2759.9" cy="1222.9" r="12.8" fill="url(#gN)"/>
<circle cx="2388.2" cy="1227.6" r="12.8" fill="url(#gN)"/>
<circle cx="2630.9" cy="1033.7" r="12.9" fill="url(#gN)"/>
<circle cx="2646.9" cy="1136.3" r="12.9" fill="url(#gN)"/>
<circle cx="2662.9" cy="1239.1" r="12.9" fill="url(#gN)"/>
<circle cx="2532.6" cy="1048.8" r="12.9" fill="url(#gN)"/>
<circle cx="2548.6" cy="1152.1" r="12.9" fill="url(#gN)"/>
<circle cx="2564.6" cy="1255.6" r="13.0" fill="url(#gN)"/>
<circle cx="2810.5" cy="1059.6" r="13.0" fill="url(#gN)"/>
<circle cx="2433.1" cy="1064.1" r="13.0" fill="url(#gN)"/>
<circle cx="2449.1" cy="1168.0" r="13.0" fill="url(#gN)"/>
<circle cx="2465.1" cy="1272.2" r="13.0" fill="url(#gN)"/>
<circle cx="2712.3" cy="1075.0" r="13.1" fill="url(#gN)"/>
<circle cx="2728.6" cy="1179.5" r="13.1" fill="url(#gN)"/>
<circle cx="2745.0" cy="1284.1" r="13.1" fill="url(#gN)"/>
<circle cx="2348.2" cy="1184.2" r="13.1" fill="url(#gN)"/>
<circle cx="2364.2" cy="1289.1" r="13.1" fill="url(#gN)"/>
<circle cx="2612.8" cy="1090.7" r="13.2" fill="url(#gN)"/>
<circle cx="2629.2" cy="1195.8" r="13.2" fill="url(#gN)"/>
<circle cx="2645.5" cy="1301.2" r="13.2" fill="url(#gN)"/>
<circle cx="2512.0" cy="1106.5" r="13.3" fill="url(#gN)"/>
<circle cx="2528.4" cy="1212.3" r="13.3" fill="url(#gN)"/>
<circle cx="2544.7" cy="1318.4" r="13.3" fill="url(#gN)"/>
<circle cx="2796.6" cy="1117.8" r="13.3" fill="url(#gN)"/>
<circle cx="2409.9" cy="1122.5" r="13.3" fill="url(#gN)"/>
<circle cx="2426.2" cy="1229.1" r="13.4" fill="url(#gN)"/>
<circle cx="2442.6" cy="1335.9" r="13.4" fill="url(#gN)"/>
<circle cx="2695.9" cy="1134.0" r="13.4" fill="url(#gN)"/>
<circle cx="2712.6" cy="1241.1" r="13.4" fill="url(#gN)"/>
<circle cx="2729.4" cy="1348.4" r="13.4" fill="url(#gN)"/>
<circle cx="2322.7" cy="1246.1" r="13.4" fill="url(#gN)"/>
<circle cx="2339.1" cy="1353.6" r="13.5" fill="url(#gN)"/>
<circle cx="2593.8" cy="1150.4" r="13.5" fill="url(#gN)"/>
<circle cx="2610.6" cy="1258.3" r="13.5" fill="url(#gN)"/>
<circle cx="2627.3" cy="1366.3" r="13.5" fill="url(#gN)"/>
<circle cx="2490.3" cy="1167.0" r="13.6" fill="url(#gN)"/>
<circle cx="2507.1" cy="1275.6" r="13.6" fill="url(#gN)"/>
<circle cx="2523.9" cy="1384.4" r="13.6" fill="url(#gN)"/>
<circle cx="2782.1" cy="1179.0" r="13.7" fill="url(#gN)"/>
<circle cx="2385.5" cy="1183.9" r="13.7" fill="url(#gN)"/>
<circle cx="2402.2" cy="1293.2" r="13.7" fill="url(#gN)"/>
<circle cx="2419.0" cy="1402.8" r="13.7" fill="url(#gN)"/>
<circle cx="2678.7" cy="1196.0" r="13.7" fill="url(#gN)"/>
<circle cx="2695.8" cy="1305.9" r="13.8" fill="url(#gN)"/>
<circle cx="2713.0" cy="1416.0" r="13.8" fill="url(#gN)"/>
<circle cx="2295.9" cy="1311.1" r="13.8" fill="url(#gN)"/>
<circle cx="2312.7" cy="1421.5" r="13.8" fill="url(#gN)"/>
<circle cx="2573.9" cy="1213.2" r="13.8" fill="url(#gN)"/>
<circle cx="2591.0" cy="1323.9" r="13.9" fill="url(#gN)"/>
<circle cx="2608.2" cy="1434.8" r="13.9" fill="url(#gN)"/>
<circle cx="2467.6" cy="1230.7" r="13.9" fill="url(#gN)"/>
<circle cx="2484.7" cy="1342.2" r="14.0" fill="url(#gN)"/>
<circle cx="2501.9" cy="1453.9" r="14.0" fill="url(#gN)"/>
<circle cx="2766.8" cy="1243.3" r="14.0" fill="url(#gN)"/>
<circle cx="2359.8" cy="1248.5" r="14.0" fill="url(#gN)"/>
<circle cx="2376.9" cy="1360.7" r="14.0" fill="url(#gN)"/>
<circle cx="2394.1" cy="1473.2" r="14.1" fill="url(#gN)"/>
<circle cx="2660.6" cy="1261.2" r="14.1" fill="url(#gN)"/>
<circle cx="2678.1" cy="1374.0" r="14.1" fill="url(#gN)"/>
<circle cx="2267.6" cy="1379.5" r="14.1" fill="url(#gN)"/>
<circle cx="2284.8" cy="1492.9" r="14.2" fill="url(#gN)"/>
<circle cx="2552.8" cy="1279.4" r="14.2" fill="url(#gN)"/>
<circle cx="2570.4" cy="1393.0" r="14.2" fill="url(#gN)"/>
<circle cx="2443.6" cy="1297.8" r="14.3" fill="url(#gN)"/>
<circle cx="2461.2" cy="1412.3" r="14.3" fill="url(#gN)"/>
<circle cx="2332.7" cy="1316.5" r="14.4" fill="url(#gN)"/>
<circle cx="2350.3" cy="1431.8" r="14.4" fill="url(#gN)"/>
<circle cx="2237.9" cy="1451.7" r="14.5" fill="url(#gN)"/>
<line x1="2237.3" y1="1261.3" x2="2286.5" y2="1231.3" stroke="#a0a0a0" stroke-width="9"/>
<line x1="2286.5" y1="1231.3" x2="2268.2" y2="1191.7" stroke="#a0a0a0" stroke-width="9"/>
<line x1="2286.5" y1="1231.3" x2="2353.9" y2="1242.1" stroke="#a0a0a0" stroke-width="9"/>
<line x1="2268.2" y1="1191.7" x2="2315.6" y2="1163.4" stroke="#a0a0a0" stroke-width="9"/>
<line x1="2315.6" y1="1163.4" x2="2297.4" y2="1125.8" stroke="#a0a0a0" stroke-width="9"/>
<line x1="2315.6" y1="1163.4" x2="2381.4" y2="1173.6" stroke="#a0a0a0" stroke-width="9"/>
<line x1="2297.4" y1="1125.8" x2="2343.3" y2="1099.0" stroke="#a0a0a0" stroke-width="9"/>
<line x1="2343.3" y1="1099.0" x2="2325.1" y2="1063.3" stroke="#a0a0a0" stroke-width="9"/>
<line x1="2343.3" y1="1099.0" x2="2407.4" y2="1108.6" stroke="#a0a0a0" stroke-width="9"/>
<line x1="2325.1" y1="1063.3" x2="2369.5" y2="1037.8" stroke="#a0a0a0" stroke-width="9"/>
<line x1="2369.5" y1="1037.8" x2="2351.4" y2="1004.0" stroke="#a0a0a0" stroke-width="9"/>
<line x1="2369.5" y1="1037.8" x2="2432.1" y2="1047.0" stroke="#a0a0a0" stroke-width="9"/>
<line x1="2351.4" y1="1004.0" x2="2394.4" y2="979.7" stroke="#a0a0a0" stroke-width="9"/>
<line x1="2394.4" y1="979.7" x2="2455.6" y2="988.5" stroke="#a0a0a0" stroke-width="9"/>
<line x1="2353.9" y1="1242.1" x2="2401.4" y2="1212.6" stroke="#a0a0a0" stroke-width="9"/>
<line x1="2401.4" y1="1212.6" x2="2381.4" y2="1173.6" stroke="#a0a0a0" stroke-width="9"/>
<line x1="2401.4" y1="1212.6" x2="2468.8" y2="1223.3" stroke="#a0a0a0" stroke-width="9"/>
<line x1="2381.4" y1="1173.6" x2="2427.3" y2="1145.7" stroke="#a0a0a0" stroke-width="9"/>
<line x1="2427.3" y1="1145.7" x2="2407.4" y2="1108.6" stroke="#a0a0a0" stroke-width="9"/>
<line x1="2427.3" y1="1145.7" x2="2493.0" y2="1155.7" stroke="#a0a0a0" stroke-width="9"/>
<line x1="2407.4" y1="1108.6" x2="2451.8" y2="1082.2" stroke="#a0a0a0" stroke-width="9"/>
<line x1="2451.8" y1="1082.2" x2="2432.1" y2="1047.0" stroke="#a0a0a0" stroke-width="9"/>
<line x1="2451.8" y1="1082.2" x2="2515.9" y2="1091.7" stroke="#a0a0a0" stroke-width="9"/>
<line x1="2432.1" y1="1047.0" x2="2475.1" y2="1021.9" stroke="#a0a0a0" stroke-width="9"/>
<line x1="2475.1" y1="1021.9" x2="2455.6" y2="988.5" stroke="#a0a0a0" stroke-width="9"/>
<line x1="2475.1" y1="1021.9" x2="2537.7" y2="1030.9" stroke="#a0a0a0" stroke-width="9"/>
<line x1="2455.6" y1="988.5" x2="2497.3" y2="964.6" stroke="#a0a0a0" stroke-width="9"/>
<line x1="2497.3" y1="964.6" x2="2558.4" y2="973.2" stroke="#a0a0a0" stroke-width="9"/>
<line x1="2468.8" y1="1223.3" x2="2514.6" y2="1194.2" stroke="#a0a0a0" stroke-width="9"/>
<line x1="2514.6" y1="1194.2" x2="2493.0" y2="1155.7" stroke="#a0a0a0" stroke-width="9"/>
<line x1="2514.6" y1="1194.2" x2="2582.0" y2="1204.7" stroke="#a0a0a0" stroke-width="9"/>
<line x1="2493.0" y1="1155.7" x2="2537.3" y2="1128.2" stroke="#a0a0a0" stroke-width="9"/>
<line x1="2537.3" y1="1128.2" x2="2515.9" y2="1091.7" stroke="#a0a0a0" stroke-width="9"/>
<line x1="2537.3" y1="1128.2" x2="2603.0" y2="1138.1" stroke="#a0a0a0" stroke-width="9"/>
<line x1="2515.9" y1="1091.7" x2="2558.8" y2="1065.6" stroke="#a0a0a0" stroke-width="9"/>
<line x1="2558.8" y1="1065.6" x2="2537.7" y2="1030.9" stroke="#a0a0a0" stroke-width="9"/>
<line x1="2558.8" y1="1065.6" x2="2622.9" y2="1075.0" stroke="#a0a0a0" stroke-width="9"/>
<line x1="2537.7" y1="1030.9" x2="2579.3" y2="1006.1" stroke="#a0a0a0" stroke-width="9"/>
<line x1="2579.3" y1="1006.1" x2="2558.4" y2="973.2" stroke="#a0a0a0" stroke-width="9"/>
<line x1="2579.3" y1="1006.1" x2="2641.8" y2="1015.1" stroke="#a0a0a0" stroke-width="9"/>
<line x1="2558.4" y1="973.2" x2="2598.7" y2="949.6" stroke="#a0a0a0" stroke-width="9"/>
<line x1="2598.7" y1="949.6" x2="2659.8" y2="958.1" stroke="#a0a0a0" stroke-width="9"/>
<line x1="2582.0" y1="1204.7" x2="2626.1" y2="1176.1" stroke="#a0a0a0" stroke-width="9"/>
<line x1="2626.1" y1="1176.1" x2="2603.0" y2="1138.1" stroke="#a0a0a0" stroke-width="9"/>
<line x1="2626.1" y1="1176.1" x2="2693.5" y2="1186.4" stroke="#a0a0a0" stroke-width="9"/>
<line x1="2603.0" y1="1138.1" x2="2645.7" y2="1111.0" stroke="#a0a0a0" stroke-width="9"/>
<line x1="2645.7" y1="1111.0" x2="2622.9" y2="1075.0" stroke="#a0a0a0" stroke-width="9"/>
<line x1="2645.7" y1="1111.0" x2="2711.4" y2="1120.8" stroke="#a0a0a0" stroke-width="9"/>
<line x1="2622.9" y1="1075.0" x2="2664.4" y2="1049.3" stroke="#a0a0a0" stroke-width="9"/>
<line x1="2664.4" y1="1049.3" x2="2641.8" y2="1015.1" stroke="#a0a0a0" stroke-width="9"/>
<line x1="2664.4" y1="1049.3" x2="2728.4" y2="1058.5" stroke="#a0a0a0" stroke-width="9"/>
<line x1="2641.8" y1="1015.1" x2="2682.0" y2="990.6" stroke="#a0a0a0" stroke-width="9"/>
<line x1="2682.0" y1="990.6" x2="2659.8" y2="958.1" stroke="#a0a0a0" stroke-width="9"/>
<line x1="2682.0" y1="990.6" x2="2744.6" y2="999.4" stroke="#a0a0a0" stroke-width="9"/>
<line x1="2659.8" y1="958.1" x2="2698.9" y2="934.8" stroke="#a0a0a0" stroke-width="9"/>
<line x1="2698.9" y1="934.8" x2="2759.9" y2="943.2" stroke="#a0a0a0" stroke-width="9"/>
<line x1="2693.5" y1="1186.4" x2="2736.1" y2="1158.2" stroke="#a0a0a0" stroke-width="9"/>
<line x1="2736.1" y1="1158.2" x2="2711.4" y2="1120.8" stroke="#a0a0a0" stroke-width="9"/>
<line x1="2711.4" y1="1120.8" x2="2752.7" y2="1094.0" stroke="#a0a0a0" stroke-width="9"/>
<line x1="2752.7" y1="1094.0" x2="2728.4" y2="1058.5" stroke="#a0a0a0" stroke-width="9"/>
<line x1="2728.4" y1="1058.5" x2="2768.4" y2="1033.2" stroke="#a0a0a0" stroke-width="9"/>
<line x1="2768.4" y1="1033.2" x2="2744.6" y2="999.4" stroke="#a0a0a0" stroke-width="9"/>
<line x1="2744.6" y1="999.4" x2="2783.4" y2="975.3" stroke="#a0a0a0" stroke-width="9"/>
<line x1="2783.4" y1="975.3" x2="2759.9" y2="943.2" stroke="#a0a0a0" stroke-width="9"/>
<line x1="2759.9" y1="943.2" x2="2797.7" y2="920.2" stroke="#a0a0a0" stroke-width="9"/>
<line x1="2237.3" y1="1261.3" x2="2203.5" y2="1255.8" stroke="#a0a0a0" stroke-width="9"/>
<line x1="2237.3" y1="1261.3" x2="2246.4" y2="1282.0" stroke="#a0a0a0" stroke-width="9"/>
<line x1="2268.2" y1="1191.7" x2="2235.2" y2="1186.5" stroke="#a0a0a0" stroke-width="9"/>
<line x1="2297.4" y1="1125.8" x2="2265.2" y2="1120.9" stroke="#a0a0a0" stroke-width="9"/>
<line x1="2325.1" y1="1063.3" x2="2293.7" y2="1058.6" stroke="#a0a0a0" stroke-width="9"/>
<line x1="2351.4" y1="1004.0" x2="2320.8" y2="999.5" stroke="#a0a0a0" stroke-width="9"/>
<line x1="2394.4" y1="979.7" x2="2385.4" y2="963.5" stroke="#a0a0a0" stroke-width="9"/>
<line x1="2353.9" y1="1242.1" x2="2363.9" y2="1262.6" stroke="#a0a0a0" stroke-width="9"/>
<line x1="2497.3" y1="964.6" x2="2487.5" y2="948.5" stroke="#a0a0a0" stroke-width="9"/>
<line x1="2468.8" y1="1223.3" x2="2479.6" y2="1243.4" stroke="#a0a0a0" stroke-width="9"/>
<line x1="2598.7" y1="949.6" x2="2588.3" y2="933.8" stroke="#a0a0a0" stroke-width="9"/>
<line x1="2582.0" y1="1204.7" x2="2593.6" y2="1224.6" stroke="#a0a0a0" stroke-width="9"/>
<line x1="2698.9" y1="934.8" x2="2687.8" y2="919.2" stroke="#a0a0a0" stroke-width="9"/>
<line x1="2693.5" y1="1186.4" x2="2705.9" y2="1206.0" stroke="#a0a0a0" stroke-width="9"/>
<line x1="2736.1" y1="1158.2" x2="2769.7" y2="1163.3" stroke="#a0a0a0" stroke-width="9"/>
<line x1="2752.7" y1="1094.0" x2="2785.4" y2="1098.8" stroke="#a0a0a0" stroke-width="9"/>
<line x1="2768.4" y1="1033.2" x2="2800.4" y2="1037.7" stroke="#a0a0a0" stroke-width="9"/>
<line x1="2783.4" y1="975.3" x2="2814.6" y2="979.6" stroke="#a0a0a0" stroke-width="9"/>
<line x1="2797.7" y1="920.2" x2="2786.0" y2="904.8" stroke="#a0a0a0" stroke-width="9"/>
<line x1="2797.7" y1="920.2" x2="2828.1" y2="924.4" stroke="#a0a0a0" stroke-width="9"/>
<circle cx="2797.7" cy="920.2" r="12.8" fill="url(#gC)"/>
<circle cx="2698.9" cy="934.8" r="12.9" fill="url(#gC)"/>
<circle cx="2759.9" cy="943.2" r="13.0" fill="url(#gC)"/>
<circle cx="2598.7" cy="949.6" r="13.0" fill="url(#gC)"/>
<circle cx="2659.8" cy="958.1" r="13.1" fill="url(#gC)"/>
<circle cx="2497.3" cy="964.6" r="13.1" fill="url(#gC)"/>
<circle cx="2558.4" cy="973.2" r="13.2" fill="url(#gC)"/>
<circle cx="2783.4" cy="975.3" r="13.2" fill="url(#gC)"/>
<circle cx="2394.4" cy="979.7" r="13.2" fill="url(#gC)"/>
<circle cx="2455.6" cy="988.5" r="13.2" fill="url(#gC)"/>
<circle cx="2682.0" cy="990.6" r="13.3" fill="url(#gC)"/>
<circle cx="2744.6" cy="999.4" r="13.3" fill="url(#gC)"/>
<circle cx="2351.4" cy="1004.0" r="13.3" fill="url(#gC)"/>
<circle cx="2579.3" cy="1006.1" r="13.3" fill="url(#gC)"/>
<circle cx="2641.8" cy="1015.1" r="13.4" fill="url(#gC)"/>
<circle cx="2475.1" cy="1021.9" r="13.4" fill="url(#gC)"/>
<circle cx="2537.7" cy="1030.9" r="13.5" fill="url(#gC)"/>
<circle cx="2768.4" cy="1033.2" r="13.5" fill="url(#gC)"/>
<circle cx="2369.5" cy="1037.8" r="13.5" fill="url(#gC)"/>
<circle cx="2432.1" cy="1047.0" r="13.6" fill="url(#gC)"/>
<circle cx="2664.4" cy="1049.3" r="13.6" fill="url(#gC)"/>
<circle cx="2728.4" cy="1058.5" r="13.7" fill="url(#gC)"/>
<circle cx="2325.1" cy="1063.3" r="13.7" fill="url(#gC)"/>
<circle cx="2558.8" cy="1065.6" r="13.7" fill="url(#gC)"/>
<circle cx="2622.9" cy="1075.0" r="13.7" fill="url(#gC)"/>
<circle cx="2451.8" cy="1082.2" r="13.8" fill="url(#gC)"/>
<circle cx="2515.9" cy="1091.7" r="13.8" fill="url(#gC)"/>
<circle cx="2752.7" cy="1094.0" r="13.9" fill="url(#gC)"/>
<circle cx="2343.3" cy="1099.0" r="13.9" fill="url(#gC)"/>
<circle cx="2407.4" cy="1108.6" r="13.9" fill="url(#gC)"/>
<circle cx="2645.7" cy="1111.0" r="14.0" fill="url(#gC)"/>
<circle cx="2711.4" cy="1120.8" r="14.0" fill="url(#gC)"/>
<circle cx="2297.4" cy="1125.8" r="14.0" fill="url(#gC)"/>
<circle cx="2537.3" cy="1128.2" r="14.1" fill="url(#gC)"/>
<circle cx="2603.0" cy="1138.1" r="14.1" fill="url(#gC)"/>
<circle cx="2427.3" cy="1145.7" r="14.2" fill="url(#gC)"/>
<circle cx="2493.0" cy="1155.7" r="14.2" fill="url(#gC)"/>
<circle cx="2736.1" cy="1158.2" r="14.2" fill="url(#gC)"/>
<circle cx="2315.6" cy="1163.4" r="14.3" fill="url(#gC)"/>
<circle cx="2381.4" cy="1173.6" r="14.3" fill="url(#gC)"/>
<circle cx="2626.1" cy="1176.1" r="14.3" fill="url(#gC)"/>
<circle cx="2693.5" cy="1186.4" r="14.4" fill="url(#gC)"/>
<circle cx="2268.2" cy="1191.7" r="14.4" fill="url(#gC)"/>
<circle cx="2514.6" cy="1194.2" r="14.4" fill="url(#gC)"/>
<circle cx="2582.0" cy="1204.7" r="14.5" fill="url(#gC)"/>
<circle cx="2401.4" cy="1212.6" r="14.5" fill="url(#gC)"/>
<circle cx="2468.8" cy="1223.3" r="14.6" fill="url(#gC)"/>
<circle cx="2286.5" cy="1231.3" r="14.7" fill="url(#gC)"/>
<circle cx="2353.9" cy="1242.1" r="14.7" fill="url(#gC)"/>
<circle cx="2237.3" cy="1261.3" r="14.8" fill="url(#gC)"/>
<line x1="2238.1" y1="1524.2" x2="2234.5" y2="334.1" stroke="#bababa" stroke-width="2.6"/>
<line x1="2238.1" y1="1524.2" x2="2267.4" y2="1451.2" stroke="#bababa" stroke-width="2.6"/>
<line x1="2238.1" y1="1524.2" x2="2349.0" y2="1504.2" stroke="#bababa" stroke-width="2.6"/>
<line x1="2234.5" y1="334.1" x2="2270.7" y2="282.2" stroke="#bababa" stroke-width="2.6"/>
<line x1="2234.5" y1="334.1" x2="2371.4" y2="319.8" stroke="#bababa" stroke-width="2.6"/>
<line x1="2267.4" y1="1451.2" x2="2270.7" y2="282.2" stroke="#bababa" stroke-width="2.6"/>
<line x1="2267.4" y1="1451.2" x2="2375.2" y2="1432.2" stroke="#bababa" stroke-width="2.6"/>
<line x1="2270.7" y1="282.2" x2="2403.0" y2="268.8" stroke="#bababa" stroke-width="2.6"/>
<line x1="2349.0" y1="1504.2" x2="2371.4" y2="319.8" stroke="#bababa" stroke-width="2.6"/>
<line x1="2349.0" y1="1504.2" x2="2375.2" y2="1432.2" stroke="#bababa" stroke-width="2.6"/>
<line x1="2371.4" y1="319.8" x2="2403.0" y2="268.8" stroke="#bababa" stroke-width="2.6"/>
<line x1="2375.2" y1="1432.2" x2="2403.0" y2="268.8" stroke="#bababa" stroke-width="2.6"/>
</svg>
<svg style="position:absolute;left:2860px;top:340px;width:130px;height:110px" viewBox="2860 340 130 110"><line x1="2904.7" y1="427" x2="2905" y2="386" stroke="#0a22ee" stroke-width="3"/><polygon points="2904,356 2916.5,385.5 2892,385.5" fill="#0a22ee"/><line x1="2904.7" y1="427" x2="2946" y2="423" stroke="#e23a22" stroke-width="3"/><polygon points="2968,419.5 2948,411.5 2950.5,431.5" fill="#e83a20"/><line x1="2904.7" y1="427" x2="2897" y2="413" stroke="#6cf04a" stroke-width="2.5"/><polygon points="2893,396.5 2902,401.5 2901,412 2889,414 2884.5,405" fill="#6cf04a"/></svg>
<div style="position:absolute;left:2932px;top:1422px;width:80px;height:80px;background:#2b5cbd;border-radius:50%;box-shadow:0 1px 3px rgba(0,0,0,0.3)"></div>
<svg style="position:absolute;left:2932px;top:1422px;width:80px;height:80px" viewBox="0 0 80 80"><circle cx="41.5" cy="22" r="6.5" fill="#fff"/><path d="M29.5 32 L46.5 29.8 L42 53 C41.5 56.5 43.5 56.5 46.5 53.2 L49.5 54.5 C45.5 61.5 40 63.5 36 63 C31.5 62.5 31 59 31.8 55 L35.5 36.5 L29.5 35.8 Z" fill="#fff"/></svg>
<svg style="position:absolute;left:0;top:1672px;width:30px;height:30px" viewBox="0 0 30 30"><path d="M0 0 L0 30 L30 30 A30 30 0 0 1 0 0 Z" fill="#000"/></svg>
<svg style="position:absolute;left:3042px;top:1672px;width:30px;height:30px" viewBox="0 0 30 30"><path d="M30 0 L30 30 L0 30 A30 30 0 0 0 30 0 Z" fill="#05050f"/></svg></body></html>
